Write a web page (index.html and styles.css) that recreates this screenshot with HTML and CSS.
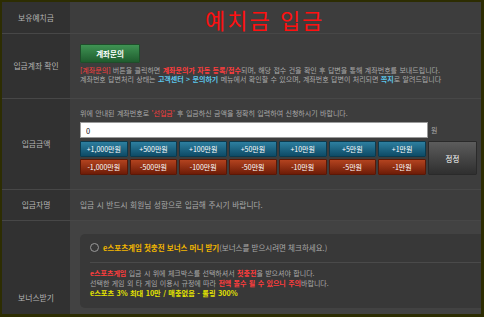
FILE: index.html
```html
<!DOCTYPE html>
<html lang="ko">
<head>
  <meta charset="UTF-8">
  <title>예치금 입금</title>
  <link rel="stylesheet" href="styles.css">
</head>
<body>
  <div class="wrap">
    <table class="form">
      <tr class="row-title">
        <th>보유예치금</th>
        <td><h1 class="title">예치금 입금</h1></td>
      </tr>
      <tr class="row-account">
        <th>입금계좌 확인</th>
        <td>
          <button class="btn-ask">계좌문의</button>
          <p class="note">
            <span class="red">[계좌문의]</span> 버튼을 클릭하면 <b class="red">계좌문의가 자동 등록/접수</b>되며, 해당 접수 건을 확인 후 답변을 통해 계좌번호를 보내드립니다.<br>
            계좌번호 답변처리 상태는 <b class="cyan">고객센터 &gt; 문의하기</b> 메뉴에서 확인할 수 있으며, 계좌번호 답변이 처리되면 <b class="cyan">쪽지</b>로 알려드립니다
          </p>
        </td>
      </tr>
      <tr class="row-amount">
        <th>입금금액</th>
        <td>
          <p class="note">위에 안내된 계좌번호로 <span class="red">'선입금'</span> 후 입금하신 금액을 정확히 입력하여 신청하시기 바랍니다.</p>
          <div class="amount-line">
            <input type="text" class="amount" value="0">
            <span class="won">원</span>
          </div>
          <div class="pad">
            <button class="plus">+1,000만원</button>
            <button class="plus">+500만원</button>
            <button class="plus">+100만원</button>
            <button class="plus">+50만원</button>
            <button class="plus">+10만원</button>
            <button class="plus">+5만원</button>
            <button class="plus">+1만원</button>
            <button class="reset">정정</button>
            <button class="minus">-1,000만원</button>
            <button class="minus">-500만원</button>
            <button class="minus">-100만원</button>
            <button class="minus">-50만원</button>
            <button class="minus">-10만원</button>
            <button class="minus">-5만원</button>
            <button class="minus">-1만원</button>
          </div>
        </td>
      </tr>
      <tr class="row-name">
        <th>입금자명</th>
        <td><p class="note name-note">입금 시 반드시 회원님 성함으로 입금해 주시기 바랍니다.</p></td>
      </tr>
      <tr class="row-bonus">
        <th>보너스받기</th>
        <td>
          <div class="bonus">
            <label class="bonus-head">
              <span class="radio"></span>
              <b class="gold">e스포츠게임 첫충전 보너스 머니 받기</b><span class="gray">(보너스를 받으시려면 체크하세요.)</span>
            </label>
            <p class="note">
              <b class="red">e스포츠게임</b> 입금 시 위에 체크박스를 선택하셔서 <b class="red">첫충전</b>을 받으셔야 합니다.<br>
              선택한 게임 외 타 게임 이용시 규정에 따라 <b class="red">전액 몰수 될 수 있으니 주의</b>바랍니다.<br>
              <b class="lemon">e스포츠 3% 최대 10만 / 매충없음 - 롤링 300%</b>
            </p>
          </div>
        </td>
      </tr>
    </table>
  </div>
</body>
</html>
```

FILE: styles.css
```css
body {
  margin: 0;
  background: #2d2d02;
  font-family: "Noto Sans CJK KR", "Noto Sans", sans-serif;
}
.wrap {
  margin: 2px 3px 4px 2px;
  background: #3d3d3d;
}
.form {
  width: 100%;
  border-collapse: collapse;
}
.form th {
  width: 68px;
  background: #313131;
  color: #b4b4b4;
  font-size: 7.8px;
  font-weight: normal;
  padding: 0;
  border-bottom: 1px solid #474747;
}
.form td {
  padding: 0 0 0 10px;
  border-bottom: 1px solid #474747;
  vertical-align: top;
}
.row-title { height: 31px; }
.row-account { height: 65px; }
.row-amount { height: 91px; }
.row-name { height: 31px; }
.row-name td { vertical-align: middle; }
.row-bonus th {
  vertical-align: bottom;
  padding-bottom: 11px;
  border-bottom: none;
}
.row-bonus td {
  background: #424242;
  padding: 13px 0 6px 10px;
  border-bottom: none;
}

.title {
  margin: 0;
  padding: 5px 0 0 125px;
  color: #ff1010;
  font-size: 22px;
  font-weight: normal;
  letter-spacing: 2px;
  line-height: 24px;
}

.note {
  margin: 0;
  color: #a9a9a9;
  font-size: 7px;
  line-height: 9.5px;
  word-spacing: 0.4px;
}
.name-note {
  font-size: 7.7px;
}
.red { color: #ff3d3d; }
.cyan { color: #5cc6ea; }
.gold { color: #f2b600; }
.lemon { color: #e4e400; font-size: 7.2px; }
.gray { color: #a9a9a9; }

button {
  font-family: inherit;
  color: #fff;
  cursor: pointer;
  padding: 0;
}
.btn-ask {
  display: block;
  width: 60px;
  height: 19px;
  margin: 10px 0 3px;
  border: 1px solid #1f4d2a;
  border-radius: 1px;
  background: linear-gradient(#3f9353, #1f5c2e);
  font-size: 7.5px;
  font-weight: bold;
}

.row-amount .note {
  padding-top: 10px;
}
.amount-line {
  display: flex;
  align-items: center;
  margin-top: 4px;
}
.amount {
  box-sizing: border-box;
  width: 348px;
  height: 16px;
  border: 1px solid #9a9a9a;
  padding: 0 5px;
  font-family: inherit;
  font-size: 7.5px;
  color: #111;
}
.won {
  margin-left: 3px;
  color: #a9a9a9;
  font-size: 7px;
}
.pad {
  display: grid;
  grid-template-columns: repeat(7, 1fr) 49px;
  grid-template-rows: 16px 16px;
  gap: 2px 2px;
  margin: 3px 4px 0 0;
}
.pad button {
  font-size: 7px;
  border-radius: 1px;
}
.plus {
  border: 1px solid #0b3a4e;
  background: linear-gradient(#2d7fa0, #0e4b66);
}
.minus {
  border: 1px solid #5a1806;
  background: linear-gradient(#b3431f, #6d1c07);
}
.reset {
  grid-column: 8;
  grid-row: 1 / 3;
  border: 1px solid #2a2a2a;
  background: linear-gradient(#5c5c5c, #2f2f2f);
  font-size: 7.5px !important;
}

.bonus {
  height: 74px;
  box-sizing: border-box;
  background: #383838;
  border-radius: 5px 0 0 5px;
  padding: 0 0 0 10px;
}
.bonus-head {
  display: flex;
  align-items: center;
  height: 28px;
  border-bottom: 1px solid #4a4a4a;
  font-size: 7.5px;
}
.radio {
  width: 7px;
  height: 7px;
  border: 1px solid #9a9a9a;
  border-radius: 50%;
  margin-right: 4px;
}
.bonus .note {
  padding-top: 5px;
  line-height: 10px;
}
```
